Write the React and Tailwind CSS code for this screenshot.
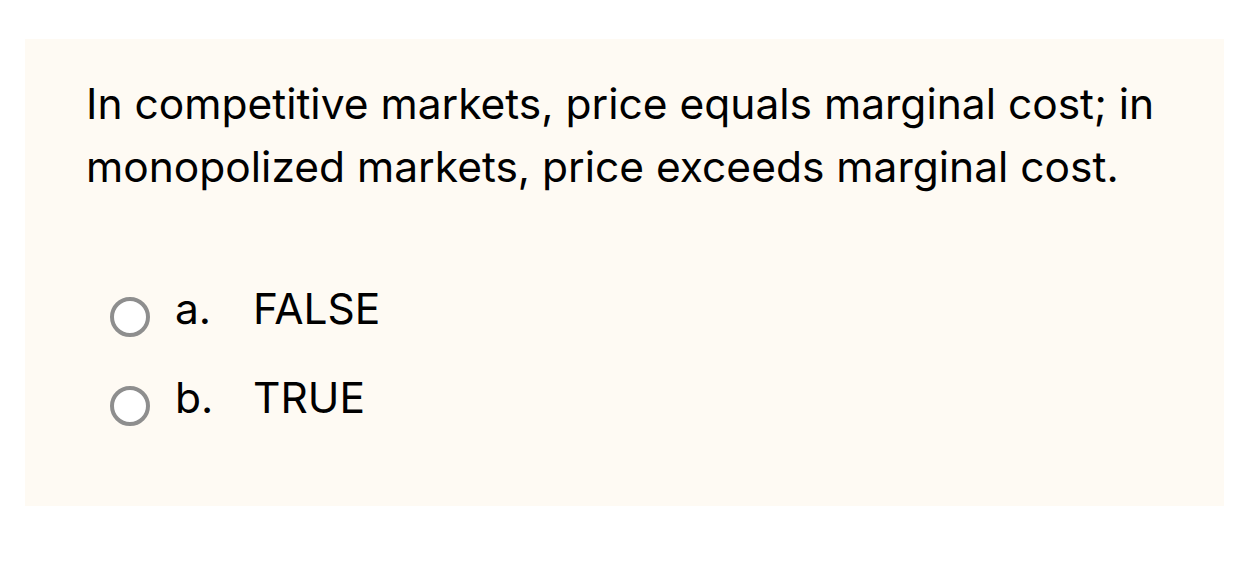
import React from 'react';

const Option = ({ letter, text }) => (
    <div className="flex items-start h-[89px]">
        <span className="mt-[20px] w-[40px] h-[40px] rounded-full border-[4px] border-[#8e8e8e] bg-white shrink-0" />
        <span className="ml-[25px] w-[78px]">{letter}</span>
        <span>{text}</span>
    </div>
);

export default function App() {
    return (
        <div className="w-[1239px] h-[566px] bg-white pt-[39px] pl-[25px]" style={{ fontFamily: 'Inter, "Noto Sans", sans-serif' }}>
            <div className="w-[1199px] h-[467px] bg-[#fefaf3] pl-[61px] pt-[33px] text-black text-[42.5px] leading-[63px]">
                <p>
                    In competitive markets, price equals marginal cost; in<br />
                    monopolized markets, price exceeds marginal cost.
                </p>
                <div className="mt-[79px] ml-[24px]">
                    <Option letter="a." text="FALSE" />
                    <Option letter="b." text="TRUE" />
                </div>
            </div>
        </div>
    );
}
